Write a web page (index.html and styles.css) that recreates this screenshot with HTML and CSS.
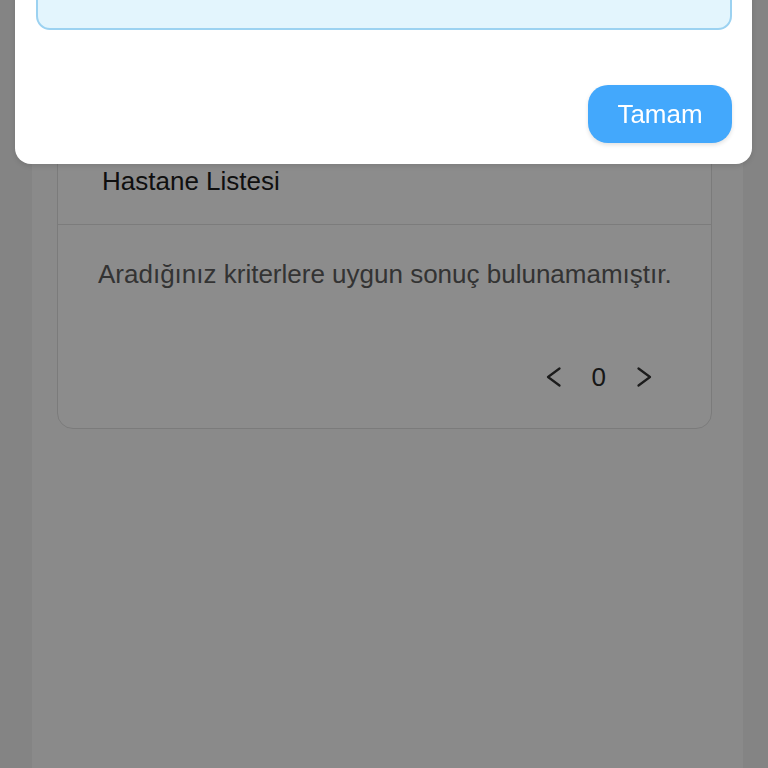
FILE: index.html
```html
<!DOCTYPE html>
<html lang="tr">
<head>
<meta charset="utf-8">
<title>Hastane Listesi</title>
<link rel="stylesheet" href="styles.css">
</head>
<body>
<div class="page">
  <div class="column">
    <section class="card">
      <header class="card-head">Hastane Listesi</header>
      <div class="card-body">
        <p class="empty">Aradığınız kriterlere uygun sonuç bulunamamıştır.</p>
        <nav class="pager">
          <svg class="chev" viewBox="0 0 15 20" width="15" height="20"><path d="M13.5 1.5 L2 10 L13.5 18.5" fill="none" stroke="#333" stroke-width="2.2" stroke-linecap="round" stroke-linejoin="round"/></svg>
          <span class="num">0</span>
          <svg class="chev" viewBox="0 0 15 20" width="15" height="20"><path d="M1.5 1.5 L13 10 L1.5 18.5" fill="none" stroke="#333" stroke-width="2.2" stroke-linecap="round" stroke-linejoin="round"/></svg>
        </nav>
      </div>
    </section>
  </div>
</div>
<div class="backdrop"></div>
<div class="modal">
  <div class="note"></div>
  <div class="actions">
    <button class="ok">Tamam</button>
  </div>
</div>
</body>
</html>
```
FILE: styles.css
```css
* { box-sizing: border-box; }
html, body { margin: 0; padding: 0; }
body {
  background: #f0f0f0;
  font-family: "Liberation Sans", Arial, sans-serif;
  overflow: hidden;
}
.page { display: flex; min-height: 768px; }
.column {
  margin-left: 32px;
  width: 711px;
  min-height: 768px;
  background: #fbfbfb;
  padding-top: 100px;
}
.card {
  margin-left: 25px;
  width: 655px;
  background: #ffffff;
  border: 1px solid #e0e0e0;
  border-radius: 16px;
}
.card-head {
  padding: 65px 0 28px 44px;
  font-size: 26px;
  line-height: 30px;
  color: #1c1c1c;
  border-bottom: 1px solid #e2e2e2;
}
.card-body { padding: 34px 0 36px 40px; }
.empty {
  margin: 0;
  font-size: 26px;
  line-height: 30px;
  color: #5e5e5e;
}
.pager {
  margin-top: 73px;
  display: flex;
  justify-content: flex-end;
  align-items: center;
  gap: 31px;
  padding-right: 59px;
  height: 30px;
}
.chev { display: block; }
.num {
  font-size: 26px;
  line-height: 30px;
  color: #2a2a2a;
}
.backdrop {
  position: fixed;
  inset: 0;
  background: rgba(0, 0, 0, 0.45);
}
.modal {
  position: fixed;
  top: -100px;
  left: 15px;
  right: 16px;
  background: #ffffff;
  border-radius: 16px;
  padding: 0 20px 21px 21px;
  box-shadow: 0 2px 6px rgba(0, 0, 0, 0.12);
}
.note {
  height: 130px;
  background: #e3f5fd;
  border: 2px solid #9cd2f1;
  border-radius: 14px;
}
.actions {
  margin-top: 55px;
  display: flex;
  justify-content: flex-end;
}
.ok {
  width: 144px;
  height: 58px;
  border: none;
  border-radius: 20px;
  background: #43a8fc;
  color: #ffffff;
  font-family: "Liberation Sans", Arial, sans-serif;
  font-size: 26px;
  box-shadow: 0 2px 4px rgba(0, 0, 0, 0.12);
  padding: 0;
}
```
